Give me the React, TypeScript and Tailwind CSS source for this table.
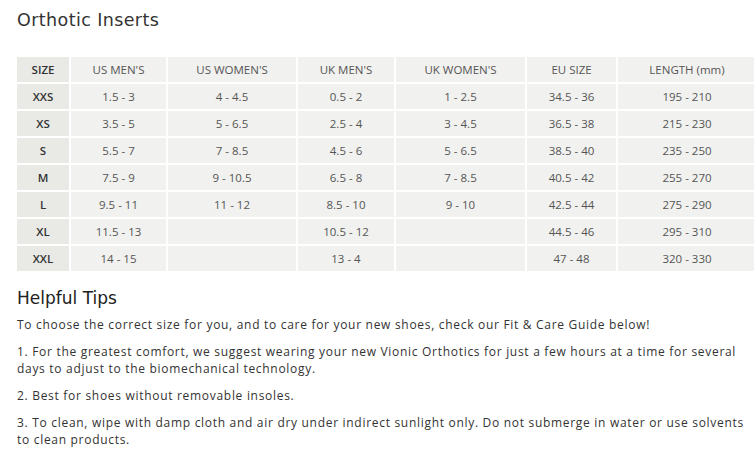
import React from "react";

const headers = ["SIZE", "US MEN'S", "US WOMEN'S", "UK MEN'S", "UK WOMEN'S", "EU SIZE", "LENGTH (mm)"];
const rows = [
  ["XXS", "1.5 - 3", "4 - 4.5", "0.5 - 2", "1 - 2.5", "34.5 - 36", "195 - 210"],
  ["XS", "3.5 - 5", "5 - 6.5", "2.5 - 4", "3 - 4.5", "36.5 - 38", "215 - 230"],
  ["S", "5.5 - 7", "7 - 8.5", "4.5 - 6", "5 - 6.5", "38.5 - 40", "235 - 250"],
  ["M", "7.5 - 9", "9 - 10.5", "6.5 - 8", "7 - 8.5", "40.5 - 42", "255 - 270"],
  ["L", "9.5 - 11", "11 - 12", "8.5 - 10", "9 - 10", "42.5 - 44", "275 - 290"],
  ["XL", "11.5 - 13", "", "10.5 - 12", "", "44.5 - 46", "295 - 310"],
  ["XXL", "14 - 15", "", "13 - 4", "", "47 - 48", "320 - 330"],
];

export default function App() {
  return (
    <div className="w-[754px] h-[462px] bg-white overflow-hidden pl-[17px] pt-[8px]" style={{ fontFamily: "'Open Sans', 'Liberation Sans', sans-serif" }}>
      <h1 className="leading-[24px] text-[#333] tracking-[0.4px]" style={{ fontFamily: "'DejaVu Sans', sans-serif", fontSize: "17.5px" }}>Orthotic Inserts</h1>
      <div className="mt-[25px] w-[740px] grid grid-cols-[52px_95px_128px_96px_129px_89px_138px] gap-[2px] bg-white text-[11.5px] text-[#555]">
        {headers.map((h, i) => (
          <div key={h} className={`h-[25px] flex items-center justify-center ${i === 0 ? "bg-[#e9e9e6] font-semibold text-[#333]" : "bg-[#f1f1ef]"}`}>{h}</div>
        ))}
        {rows.map((r) =>
          r.map((c, i) => (
            <div key={r[0] + i} className={`h-[25px] flex items-center justify-center ${i === 0 ? "bg-[#e9e9e6] font-semibold text-[#333]" : "bg-[#f1f1ef]"}`}>{c}</div>
          ))
        )}
      </div>
      <h2 className="mt-[16px] text-[17px] leading-[22px] text-[#222]" style={{ fontFamily: "'DejaVu Sans', sans-serif" }}>Helpful Tips</h2>
      <div className="mt-[7px] text-[12px] leading-[17px] text-[#333] tracking-[0.7px] w-[730px] flex flex-col gap-[10px]">
        <p>To choose the correct size for you, and to care for your new shoes, check our Fit &amp; Care Guide below!</p>
        <p>1. For the greatest comfort, we suggest wearing your new Vionic Orthotics for just a few hours at a time for several days to adjust to the biomechanical technology.</p>
        <p>2. Best for shoes without removable insoles.</p>
        <p>3. To clean, wipe with damp cloth and air dry under indirect sunlight only. Do not submerge in water or use solvents to clean products.</p>
      </div>
    </div>
  );
}
